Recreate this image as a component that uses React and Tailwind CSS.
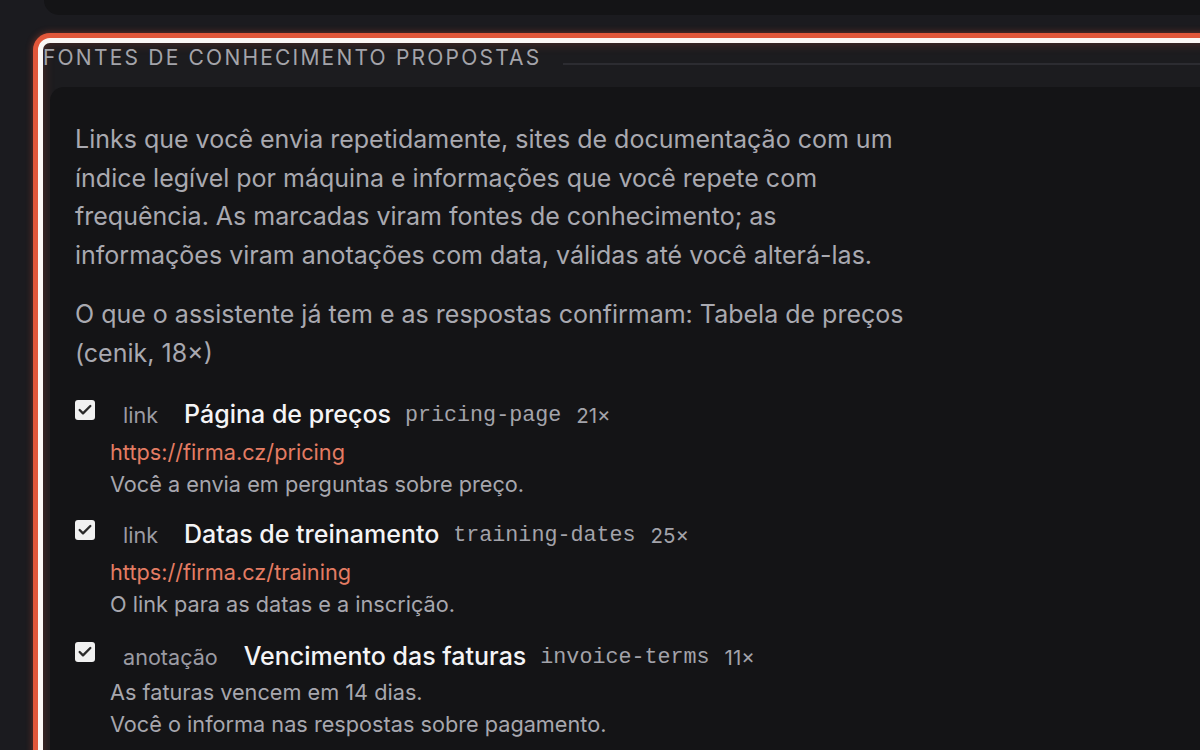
import { Check } from "lucide-react";

const items = [
  {
    kind: "link",
    title: "Página de preços",
    slug: "pricing-page",
    count: "21×",
    url: "https://firma.cz/pricing",
    lines: ["Você a envia em perguntas sobre preço."],
  },
  {
    kind: "link",
    title: "Datas de treinamento",
    slug: "training-dates",
    count: "25×",
    url: "https://firma.cz/training",
    lines: ["O link para as datas e a inscrição."],
  },
  {
    kind: "anotação",
    title: "Vencimento das faturas",
    slug: "invoice-terms",
    count: "11×",
    lines: ["As faturas vencem em 14 dias.", "Você o informa nas respostas sobre pagamento."],
  },
];

const SourceItem = ({ item }) => {
  return (
    <div className="flex flex-col">
      <div className="flex h-[32px] items-baseline leading-[32px]">
        <span className="flex h-[20px] w-[20px] shrink-0 self-center items-center justify-center rounded-[3px] bg-[#f1f1f1] -translate-y-[4px]">
          <Check size={16} strokeWidth={3.5} className="text-[#2a2a2a]" />
        </span>
        <span className="ml-[28px] mr-[26px] text-[21.6px] text-[#9b9ba3]">{item.kind}</span>
        <span className="text-[25px] font-medium text-[#f4f4f6]">{item.title}</span>
        <span className="ml-[14px] -translate-y-[2px] font-['Liberation_Mono',monospace] text-[21.7px] text-[#a3a3aa]">
          {item.slug}
        </span>
        <span className="ml-[15px] text-[20.5px] text-[#a3a3aa]">{item.count}</span>
      </div>
      <div className="pl-[35px]">
        {item.url && (
          <p className="mt-[6px] text-[21.7px] leading-[32px] text-[#e47c63]">{item.url}</p>
        )}
        {item.lines.map((l, i) => (
          <p key={i} className={`text-[21.7px] leading-[32px] text-[#a7a7ae] ${!item.url && i === 0 ? "mt-[4px]" : ""}`}>
            {l}
          </p>
        ))}
      </div>
    </div>
  );
};

export default function App() {
  return (
    <div className="h-[750px] w-[1200px] overflow-hidden bg-[#1b1b1f] font-['Inter',sans-serif]">
      <div className="ml-[44px] h-[15px] w-[1300px] rounded-bl-[16px] bg-[#141416]"></div>

      <div className="ml-[38px] mt-[23px] w-[1300px] rounded-[12px] border-[5px] border-[#fbf7f5] bg-[#1c1c1f] shadow-[0_0_0_5px_#e2573a,0_0_6px_6px_rgba(226,87,58,0.35),inset_0_0_12px_rgba(226,87,58,0.28)]">
        <div className="flex items-end gap-[22px] pt-[2px]">
          <h2 className="text-[21px] leading-[26px] tracking-[0.105em] text-[#a4a4aa]">
            FONTES DE CONHECIMENTO PROPOSTAS
          </h2>
          <div className="mb-[6px] h-[2px] flex-1 bg-[#2c2c31]"></div>
        </div>

        <div className="ml-[7px] mt-[16px] h-[700px] rounded-tl-[14px] bg-[#141416] pl-[25px] pt-[33px]">
          <p className="max-w-[845px] text-[25px] leading-[38.5px] text-[#a9a9b0]">
            Links que você envia repetidamente, sites de documentação com um índice legível por
            máquina e informações que você repete com frequência. As marcadas viram fontes de
            conhecimento; as informações viram anotações com data, válidas até você alterá-las.
          </p>
          <p className="mt-[21px] max-w-[845px] text-[25px] leading-[38.5px] text-[#a9a9b0]">
            O que o assistente já tem e as respostas confirmam: Tabela de preços (cenik, 18×)
          </p>

          <div className="mt-[26px] flex flex-col">
            <SourceItem item={items[0]} />
            <div className="mt-[18px]">
              <SourceItem item={items[1]} />
            </div>
            <div className="mt-[20px]">
              <SourceItem item={items[2]} />
            </div>
          </div>
        </div>
      </div>
    </div>
  );
}
